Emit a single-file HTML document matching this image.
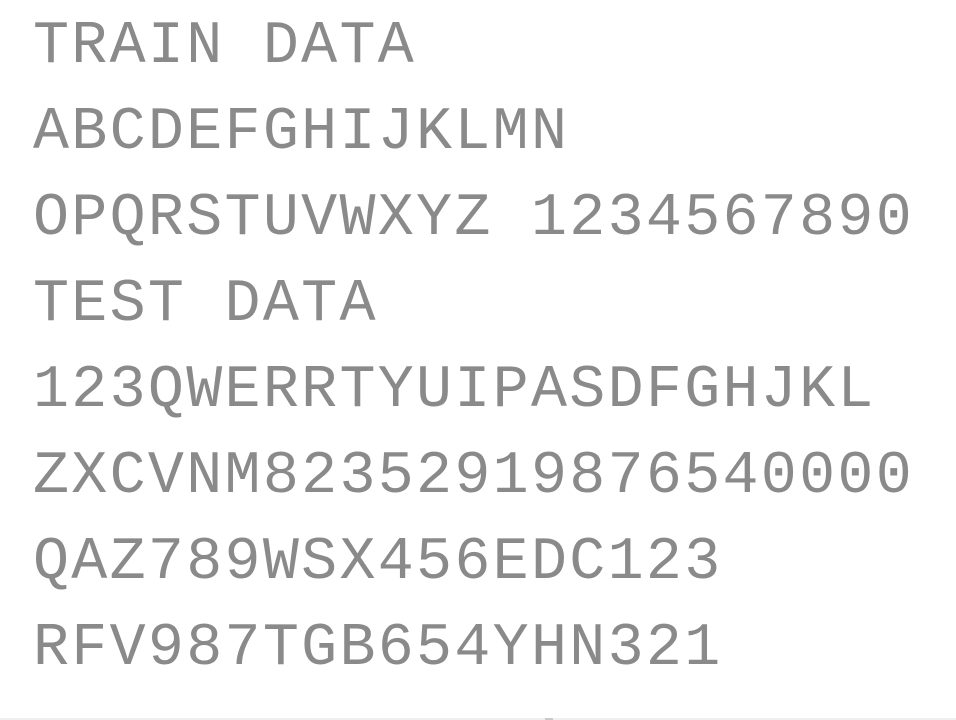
<!DOCTYPE html>
<html><head><meta charset="utf-8"><style>
html,body{margin:0;padding:0;background:#fff;width:956px;height:720px;overflow:hidden;position:relative}
.l{position:absolute;left:33px;font-family:"Liberation Mono",monospace;font-size:60px;line-height:60px;color:#8a8a8a;letter-spacing:2.3px;white-space:pre}
.sb{position:absolute;left:0;top:718px;width:956px;height:2px;background:#f0f0f0}
.th{position:absolute;left:545px;top:718px;width:8px;height:2px;background:#c8c8c8}
</style></head><body>
<div class="l" style="top:17px">TRAIN DATA</div>
<div class="l" style="top:103px">ABCDEFGHIJKLMN</div>
<div class="l" style="top:189px">OPQRSTUVWXYZ 1234567890</div>
<div class="l" style="top:275px">TEST DATA</div>
<div class="l" style="top:361px">123QWERRTYUIPASDFGHJKL</div>
<div class="l" style="top:447px">ZXCVNM82352919876540000</div>
<div class="l" style="top:533px">QAZ789WSX456EDC123</div>
<div class="l" style="top:619px">RFV987TGB654YHN321</div>
<div class="sb"></div><div class="th"></div>
</body></html>
